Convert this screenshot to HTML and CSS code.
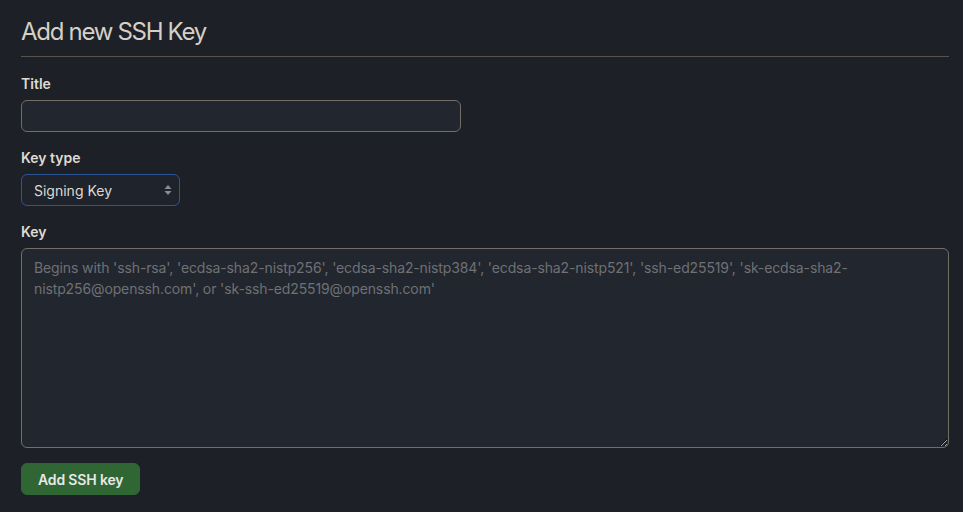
FILE: index.html
```html
<!DOCTYPE html>
<html lang="en">
<head>
<meta charset="utf-8">
<title>Add new SSH Key</title>
<link rel="stylesheet" href="styles.css">
</head>
<body>
<main class="page">
  <div class="subhead">
    <h2 class="subhead-heading">Add new SSH Key</h2>
  </div>
  <form class="form">
    <div class="form-group">
      <label class="form-label" for="title">Title</label>
      <input class="form-control title-input" id="title" type="text">
    </div>
    <div class="form-group">
      <label class="form-label" for="type">Key type</label>
      <div class="select-wrap">
        <select class="form-select" id="type">
          <option>Signing Key</option>
        </select>
        <svg class="select-arrows" width="8" height="12" viewBox="0 0 8 12" aria-hidden="true">
          <path d="M4 1 L7.5 5 H0.5 Z" fill="#8b8d92"/>
          <path d="M4 11 L7.5 7 H0.5 Z" fill="#8b8d92"/>
        </svg>
      </div>
    </div>
    <div class="form-group">
      <label class="form-label" for="key">Key</label>
      <textarea class="form-control key-input" id="key" placeholder="Begins with 'ssh-rsa', 'ecdsa-sha2-nistp256', 'ecdsa-sha2-nistp384', 'ecdsa-sha2-nistp521', 'ssh-ed25519', 'sk-ecdsa-sha2-nistp256@openssh.com', or 'sk-ssh-ed25519@openssh.com'"></textarea>
    </div>
    <button class="btn-primary" type="button">Add SSH key</button>
  </form>
</main>
</body>
</html>
```
FILE: styles.css
```css
html, body {
  margin: 0;
  padding: 0;
  background: #1d2027;
}
body {
  font-family: Inter, "Noto Sans", "Liberation Sans", sans-serif;
  font-size: 14px;
  line-height: 1.5;
  color: #dedad2;
}
.page {
  padding: 14px 14px 0 21px;
}
.subhead {
  padding-bottom: 6px;
  border-bottom: 1px solid #57544e;
  margin-bottom: 16px;
}
.subhead-heading {
  margin: 0;
  font-size: 24px;
  font-weight: 400;
  line-height: 36px;
  letter-spacing: -1.3px;
  color: #d4d0c8;
}
.form-group {
  margin: 0 0 15px;
}
.form-label {
  display: block;
  font-weight: 600;
  line-height: 21px;
  margin-bottom: 6px;
  color: #dedad2;
}
.form-control {
  box-sizing: border-box;
  display: block;
  font-family: inherit;
  font-size: 14px;
  line-height: 20px;
  color: #dedad2;
  background: #22262e;
  border: 1px solid #736e64;
  border-radius: 6px;
  padding: 5px 12px;
  outline: none;
}
.title-input {
  width: 440px;
  height: 32px;
}
.select-wrap {
  position: relative;
  width: 159px;
}
.form-select {
  box-sizing: border-box;
  width: 159px;
  height: 32px;
  appearance: none;
  -webkit-appearance: none;
  font-family: inherit;
  font-size: 14px;
  color: #dedad2;
  background: #1f232b;
  border: 1px solid #2c5596;
  border-radius: 6px;
  padding: 0 24px 0 12px;
  outline: none;
}
.select-arrows {
  position: absolute;
  right: 8px;
  top: 10px;
}
.key-input {
  width: 100%;
  height: 200px;
  padding: 8px 12px;
  line-height: 21px;
  resize: both;
}
.key-input::placeholder {
  color: #6f7175;
  letter-spacing: -0.12px;
}
.btn-primary {
  box-sizing: border-box;
  height: 32px;
  padding: 0 16px;
  font-family: inherit;
  font-size: 14px;
  font-weight: 600;
  letter-spacing: -0.15px;
  color: #e8e8e8;
  background: #2f6634;
  border: 1px solid #2f6634;
  border-radius: 6px;
}
```
